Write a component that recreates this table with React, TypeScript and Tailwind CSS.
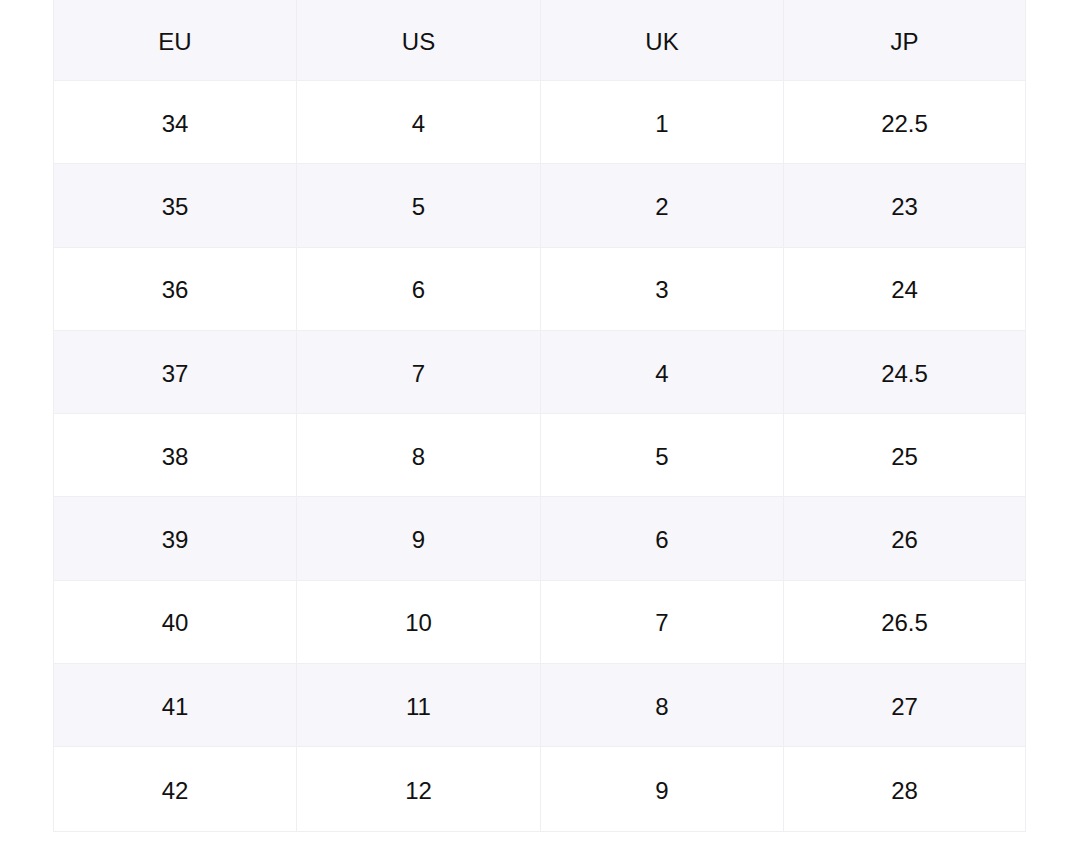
const headers = ["EU", "US", "UK", "JP"];

const rows = [
  ["34", "4", "1", "22.5"],
  ["35", "5", "2", "23"],
  ["36", "6", "3", "24"],
  ["37", "7", "4", "24.5"],
  ["38", "8", "5", "25"],
  ["39", "9", "6", "26"],
  ["40", "10", "7", "26.5"],
  ["41", "11", "8", "27"],
  ["42", "12", "9", "28"],
];

export default function App() {
  return (
    <div className="w-[1080px] h-[848px] bg-white font-['Liberation_Sans',Arial,sans-serif] text-[#111]">
      <div className="ml-[53px] w-[973px] border-l border-r border-b border-[#efeff3]">
        {/* header */}
        <div className="grid grid-cols-[243px_244px_243px_1fr] h-[81px] bg-[#f7f6fa] border-b border-[#efeff3]">
          {headers.map((h, i) => (
            <div
              key={h}
              className={`flex items-center justify-center pt-[3px] text-[24px] ${i < 3 ? "border-r border-[#efeff3]" : ""}`}
            >
              {h}
            </div>
          ))}
        </div>

        {rows.map((r, ri) => (
          <div
            key={r[0]}
            className={`grid grid-cols-[243px_244px_243px_1fr] h-[83.3px] ${ri % 2 === 1 ? "bg-[#f7f6fa]" : "bg-white"} ${ri < rows.length - 1 ? "border-b border-[#efeff3]" : ""}`}
          >
            {r.map((c, i) => (
              <div
                key={i}
                className={`flex items-center justify-center pt-[3px] text-[24px] ${i < 3 ? "border-r border-[#efeff3]" : ""}`}
              >
                {c}
              </div>
            ))}
          </div>
        ))}
      </div>
    </div>
  );
}
